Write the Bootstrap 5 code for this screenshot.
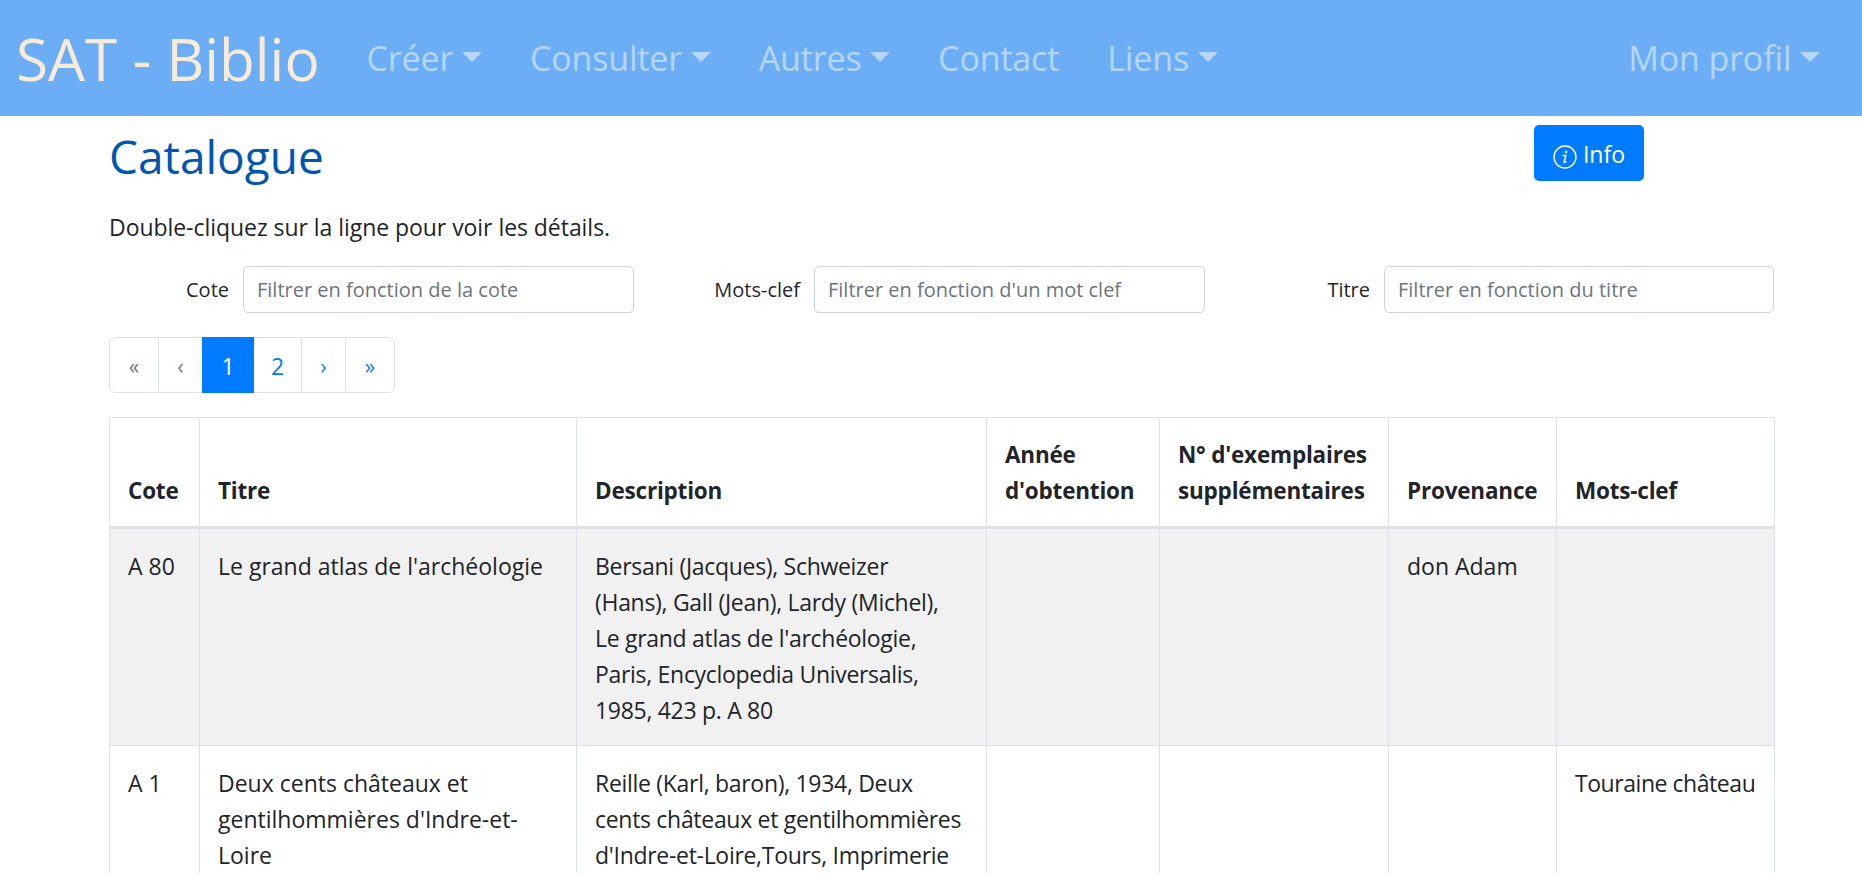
<!DOCTYPE html>
<html lang="fr">
<head>
    <meta charset="UTF-8">
    <meta name="viewport" content="width=device-width, initial-scale=1.0">
    <title>SAT - Biblio</title>

    <link rel="stylesheet" href="https://cdn.jsdelivr.net/npm/bootstrap@5.3.0/dist/css/bootstrap.min.css">

    <style>
        html, body {
            height: 100%;
            overflow: hidden;
        }

        body {
            font-family: "Open Sans", "Noto Sans", sans-serif;
            font-size: 23px;
            line-height: 36px;
            color: #212529;
        }

        .barre-haut {
            --bs-navbar-nav-link-padding-x: 24px;
            background-color: #6caef5;
            height: 116px;
            padding: 0 18px 0 16px;
        }

        .barre-haut .navbar-brand {
            color: #faebd7;
            font-size: 58.5px;
            line-height: 80px;
            padding: 0;
            margin-right: 23px;
        }

        .barre-haut .nav-link {
            color: rgba(255, 255, 255, .5);
            font-size: 34px;
            line-height: 48px;
            padding-top: 8px;
            padding-bottom: 8px;
            letter-spacing: -0.15px;
        }

        .contenu {
            padding: 0 88px 0 109px;
        }

        .titre-page {
            color: #0056b3;
            font-size: 46px;
            line-height: 58px;
            margin: 0;
            padding-top: 11px;
        }

        .entete-page {
            padding-right: 130px;
        }

        .btn-info-page {
            background-color: #007bff;
            border: 0;
            border-radius: 5px;
            color: #fff;
            font-size: 23px;
            line-height: 36px;
            width: 110px;
            height: 56px;
            margin-top: 9px;
            padding: 2px 0 0;
        }

        .btn-info-page svg {
            vertical-align: -6px;
        }

        .consigne {
            margin: 24px 0 21px;
            letter-spacing: -0.05px;
        }

        .filtres {
            display: grid;
            grid-template-columns: 134px 391px 180px 391px 179px 390px;
            align-items: center;
            margin-bottom: 24px;
        }

        .filtres label {
            text-align: right;
            padding-right: 14px;
            margin: 0;
            font-size: 20px;
        }

        .filtres .form-control {
            height: 47px;
            font-size: 20px;
            padding: 6px 13px;
            border-radius: 5px;
            border-color: #ced4da;
        }

        .filtres .form-control::placeholder {
            color: #6c757d;
        }

        .pages {
            margin-bottom: 24px;
        }

        .pages .page-link {
            color: #007bff;
            font-size: 23px;
            height: 56px;
            line-height: 36px;
            padding: 10px 0;
            text-align: center;
            border-color: #dee2e6;
        }

        .pages .page-item.disabled .page-link {
            color: #6c757d;
            background-color: #fff;
        }

        .pages .page-item.active .page-link {
            background-color: #007bff;
            border-color: #007bff;
            color: #fff;
        }

        .pages .fleche .page-link {
            font-size: 21px;
        }

        .p1 { width: 50px; }
        .p2 { width: 44px; }
        .p3 { width: 51px; }
        .p4 { width: 48px; }
        .p5 { width: 44px; }
        .p6 { width: 49px; }

        .table-catalogue {
            table-layout: fixed;
            width: 1665px;
            margin: 0;
            border-color: #dee2e6;
        }

        .table-catalogue th, .table-catalogue td {
            line-height: 36px;
        }

        .table-catalogue td {
            padding: 19px 18px 17px;
        }

        .table-catalogue td.serre {
            letter-spacing: -0.3px;
        }

        .table-catalogue td.mots-clef {
            letter-spacing: -0.45px;
        }

        .table-catalogue thead th {
            vertical-align: bottom;
            padding: 19px 18px 17px;
            border-bottom: 3px solid #dee2e6;
            font-size: 22.5px;
            font-weight: 700;
            letter-spacing: -0.2px;
        }

        .table-catalogue tbody tr:first-child td {
            background-color: #f1f1f1;
        }

        .c1 { width: 90px; }
        .c2 { width: 377px; }
        .c3 { width: 410px; }
        .c4 { width: 173px; }
        .c5 { width: 229px; }
        .c6 { width: 168px; }
        .c7 { width: 218px; }
    </style>
</head>
<body>
    <nav class="navbar navbar-expand barre-haut">
        <a class="navbar-brand" href="#">SAT - Biblio</a>
        <ul class="navbar-nav me-auto">
            <li class="nav-item"><a class="nav-link dropdown-toggle" href="#">Créer</a></li>
            <li class="nav-item"><a class="nav-link dropdown-toggle" href="#">Consulter</a></li>
            <li class="nav-item"><a class="nav-link dropdown-toggle" href="#">Autres</a></li>
            <li class="nav-item"><a class="nav-link" href="#">Contact</a></li>
            <li class="nav-item"><a class="nav-link dropdown-toggle" href="#">Liens</a></li>
        </ul>
        <ul class="navbar-nav">
            <li class="nav-item"><a class="nav-link dropdown-toggle" href="#">Mon profil</a></li>
        </ul>
    </nav>

    <div class="contenu">
        <div class="d-flex justify-content-between align-items-start entete-page">
            <h1 class="titre-page">Catalogue</h1>
            <button type="button" class="btn btn-info-page">
                <svg width="24" height="24" viewBox="0 0 24 24" fill="none" stroke="#fff">
                    <circle cx="12" cy="12" r="11" stroke-width="1.4"/>
                    <path d="M10.2 10.4h2.6l-1.7 6.6c-.1.5.3.7 1.6-.2" stroke-width="1.5" stroke-linecap="round"/>
                    <circle cx="13.2" cy="7" r="1.2" fill="#fff" stroke="none"/>
                </svg>
                Info
            </button>
        </div>

        <p class="consigne">Double-cliquez sur la ligne pour voir les détails.</p>

        <form class="filtres">
            <label for="f-cote">Cote</label>
            <input id="f-cote" type="text" class="form-control" placeholder="Filtrer en fonction de la cote">
            <label for="f-mot">Mots-clef</label>
            <input id="f-mot" type="text" class="form-control" placeholder="Filtrer en fonction d'un mot clef">
            <label for="f-titre">Titre</label>
            <input id="f-titre" type="text" class="form-control" placeholder="Filtrer en fonction du titre">
        </form>

        <ul class="pagination pages">
            <li class="page-item disabled fleche p1"><a class="page-link" href="#">«</a></li>
            <li class="page-item disabled fleche p2"><a class="page-link" href="#">‹</a></li>
            <li class="page-item active p3"><a class="page-link" href="#">1</a></li>
            <li class="page-item p4"><a class="page-link" href="#">2</a></li>
            <li class="page-item fleche p5"><a class="page-link" href="#">›</a></li>
            <li class="page-item fleche p6"><a class="page-link" href="#">»</a></li>
        </ul>

        <table class="table table-bordered table-catalogue">
            <colgroup>
                <col class="c1"><col class="c2"><col class="c3"><col class="c4"><col class="c5"><col class="c6"><col class="c7">
            </colgroup>
            <thead>
                <tr>
                    <th>Cote</th>
                    <th>Titre</th>
                    <th>Description</th>
                    <th>Année d'obtention</th>
                    <th>N° d'exemplaires supplémentaires</th>
                    <th>Provenance</th>
                    <th>Mots-clef</th>
                </tr>
            </thead>
            <tbody>
                <tr>
                    <td>A 80</td>
                    <td>Le grand atlas de l'archéologie</td>
                    <td class="serre">Bersani (Jacques), Schweizer<br>(Hans), Gall (Jean), Lardy (Michel), Le grand atlas de l'archéologie, Paris, Encyclopedia Universalis, 1985, 423 p. A 80</td>
                    <td></td>
                    <td></td>
                    <td>don Adam</td>
                    <td></td>
                </tr>
                <tr>
                    <td>A 1</td>
                    <td>Deux cents châteaux et gentilhommières d'Indre-et-Loire</td>
                    <td class="serre">Reille (Karl, baron), 1934, Deux cents châteaux et gentilhommières d'Indre-et-Loire,Tours, Imprimerie</td>
                    <td></td>
                    <td></td>
                    <td></td>
                    <td class="mots-clef text-nowrap">Touraine château</td>
                </tr>
            </tbody>
        </table>
    </div>

    <script src="https://cdn.jsdelivr.net/npm/bootstrap@5.3.0/dist/js/bootstrap.bundle.min.js"></script>
</body>
</html>
